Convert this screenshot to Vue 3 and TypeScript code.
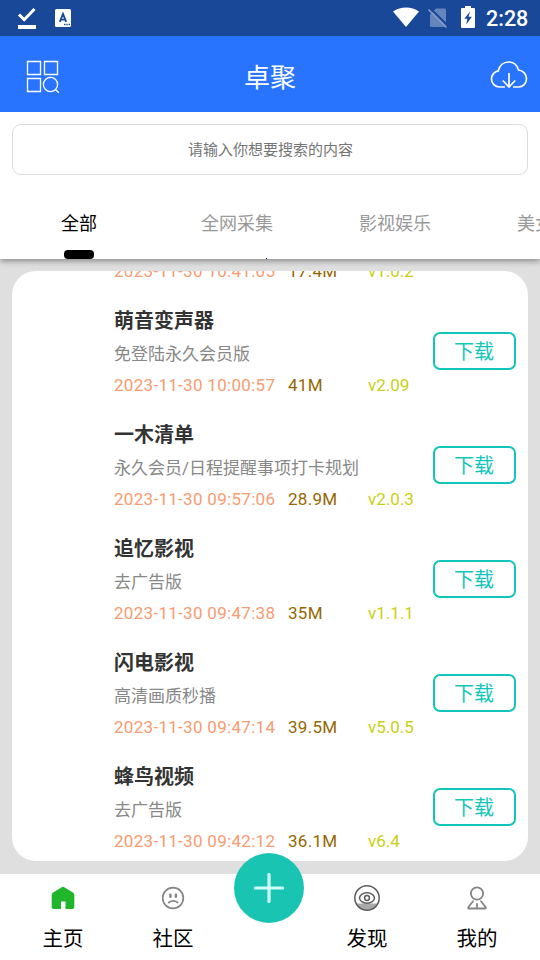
<script setup lang="ts">
interface AppItem {
  title: string
  desc: string
  date: string
  size: string
  version: string
}

const tabs: string[] = ['全部', '全网采集', '影视娱乐', '美女直播']

const apps: AppItem[] = [
  { title: '', desc: '', date: '2023-11-30 10:41:05', size: '17.4M', version: 'v1.0.2' },
  { title: '萌音变声器', desc: '免登陆永久会员版', date: '2023-11-30 10:00:57', size: '41M', version: 'v2.09' },
  { title: '一木清单', desc: '永久会员/日程提醒事项打卡规划', date: '2023-11-30 09:57:06', size: '28.9M', version: 'v2.0.3' },
  { title: '追忆影视', desc: '去广告版', date: '2023-11-30 09:47:38', size: '35M', version: 'v1.1.1' },
  { title: '闪电影视', desc: '高清画质秒播', date: '2023-11-30 09:47:14', size: '39.5M', version: 'v5.0.5' },
  { title: '蜂鸟视频', desc: '去广告版', date: '2023-11-30 09:42:12', size: '36.1M', version: 'v6.4' },
]
</script>

<template>
  <div class="screen">
    <div class="status">
      <svg class="s-check" width="20" height="24" viewBox="0 0 20 24">
        <path d="M2 8.500l5.200 5.200L17.500 3" fill="none" stroke="#fff" stroke-width="3" />
        <path d="M1 19h18v4H1z" fill="#fff" />
      </svg>
      <svg class="s-app" width="16" height="18" viewBox="0 0 16 18">
        <rect width="16" height="18" rx="1.500" fill="#fff" />
        <path d="M4.800 12.800L8 5l3.200 7.800M5.800 10.600h4.400" fill="none" stroke="#194899" stroke-width="1.900" />
        <path d="M9 15.500h1.400M11.300 15.500h1.400M13.600 15.500h1.400" stroke="#194899" stroke-width="1.400" />
      </svg>
      <svg class="s-wifi" width="26" height="20" viewBox="0 0 26 20">
        <path d="M0 4.500C7.500-1 18.500-1 26 4.500L13 20z" fill="#fff" />
      </svg>
      <svg class="s-sim" width="20" height="20" viewBox="0 0 20 20">
        <path d="M2 6.500L8 .5h8.500q1.500 0 1.500 1.500v17H3.500Q2 19 2 17.500z" fill="#6585bd" />
        <path d="M1.500 -.5L20.500 18.500" stroke="#194899" stroke-width="2" />
        <path d="M.5 1.500L18.500 19.500" stroke="#8199c7" stroke-width="1.600" />
      </svg>
      <svg class="s-battery" width="14" height="22" viewBox="0 0 14 22">
        <path d="M4 0h6v2h3q1 0 1 1v18q0 1-1 1H1q-1 0-1-1V3q0-1 1-1h3z" fill="#fff" />
        <path d="M9 5.500L3.300 12.800h3L5.300 18.500l5.500-7.800H7.500z" fill="#194899" />
      </svg>
      <span class="time">2:28</span>
    </div>

    <header class="bar">
      <svg width="34" height="34" viewBox="0 0 34 34" fill="none" stroke="#fff" stroke-width="1.300">
        <path d="M1.500 1.500h13v13h-13zM18.500 1.500h13v13h-13zM1.500 18.500h13v13h-13z" />
        <circle cx="24.500" cy="24.500" r="7.100" />
        <path d="M29.500 29.500l3.300 3.300" />
      </svg>
      <h1>卓聚</h1>
      <svg class="cloud" width="38" height="30" viewBox="0 0 38 30" fill="none" stroke="#fff" stroke-width="1.700">
        <path d="M15 27H9.500C5 27 1.500 23.500 1.500 19c0-4.200 3-7.500 6.800-8.200C9.500 5.500 13.500 2 18.700 2c5 0 8.500 3.300 9.800 8 4.600.5 8 4.200 8 8.700 0 4.700-3.500 8.300-8 8.300H23" />
        <path d="M19 13v14M12.800 20.500l6.200 6.500 6.200-6.500" />
      </svg>
    </header>

    <section class="search-area">
      <div class="search">请输入你想要搜索的内容</div>
    </section>

    <nav class="tabs">
      <div v-for="(tab, i) in tabs" :key="tab" class="tab" :class="{ active: i === 0, marked: i === 1 }">
        <span>{{ tab }}</span>
      </div>
    </nav>

    <main class="body">
      <div class="card">
        <div class="list">
          <article v-for="app in apps" :key="app.date" class="row">
            <div class="info">
              <h2>{{ app.title }}</h2>
              <p class="desc">{{ app.desc }}</p>
              <div class="meta">
                <span class="date">{{ app.date }}</span>
                <span class="size">{{ app.size }}</span>
                <span class="version">{{ app.version }}</span>
              </div>
            </div>
            <button v-if="app.title" class="download">下载</button>
          </article>
        </div>
      </div>
    </main>

    <footer class="nav">
      <div class="item">
        <svg width="28" height="28" viewBox="0 0 28 28">
          <path d="M12.700 3.200q1.300-.8 2.600 0l8.600 5.300q1.400.9 1.400 2.500v12.200q0 1.800-1.800 1.800h-7v-7.500h-4.500V25H4.500q-1.800 0-1.800-1.800V11q0-1.600 1.400-2.500z" fill="#20b52b" />
        </svg>
        <span>主页</span>
      </div>
      <div class="item">
        <svg width="28" height="28" viewBox="0 0 28 28" fill="none" stroke="#858585" stroke-width="1.700" stroke-linecap="round">
          <circle cx="14" cy="14" r="10.300" />
          <path d="M11.400 10.800v2M16.900 10.800v2" stroke-width="2.500" />
          <path d="M9.700 18.500q4.500-3.200 9 0" />
        </svg>
        <span>社区</span>
      </div>
      <div class="center">
        <button class="plus">
          <svg width="30" height="30" viewBox="0 0 30 30">
            <path d="M15 1.500v27M1.500 15h27" stroke="#d0fff8" stroke-width="3.200" stroke-linecap="round" />
          </svg>
        </button>
      </div>
      <div class="item">
        <svg width="28" height="28" viewBox="0 0 28 28" fill="none" stroke="#5d5d5d" stroke-width="1.500">
          <path d="M3.500 19.500h21q-3.500 6.700-10.500 6.700T3.500 19.500z" fill="#aaa" stroke="none" />
          <circle cx="14" cy="14" r="12.200" />
          <ellipse cx="14" cy="14" rx="7.500" ry="5.200" />
          <circle cx="14" cy="14" r="2.400" />
        </svg>
        <span>发现</span>
      </div>
      <div class="item">
        <svg width="28" height="28" viewBox="0 0 28 28" fill="none" stroke="#858585" stroke-width="1.800" stroke-linecap="round" stroke-linejoin="round">
          <circle cx="14" cy="9.500" r="6.100" />
          <path d="M10 17.300L5.300 23.300Q4.800 24.500 6 24.500h16q1.200 0 .7-1.200L18 17.300M14 20v4" />
        </svg>
        <span>我的</span>
      </div>
    </footer>
  </div>
</template>

<style>
body {
  margin: 0;
}
</style>

<style scoped>
* {
  box-sizing: border-box;
}
.screen {
  width: 540px;
  height: 960px;
  overflow: hidden;
  display: flex;
  flex-direction: column;
  background: #fff;
  font-family: Roboto, 'Noto Sans CJK SC', sans-serif;
}
.status {
  height: 36px;
  flex: none;
  display: flex;
  align-items: flex-start;
  padding: 6px 12px 0 17px;
  background: #194899;
  color: #fff;
}
.s-check {
  margin-right: 18px;
}
.s-app {
  margin-top: 3px;
}
.s-wifi {
  margin: 1px 9px 0 auto;
}
.s-sim {
  margin: 2px 13px 0 0;
}
.s-battery {
  margin-right: 11px;
}
.time {
  width: 42px;
  font-size: 21.500px;
  font-weight: 500;
  line-height: 25px;
  white-space: nowrap;
}
.bar {
  height: 76px;
  flex: none;
  display: flex;
  align-items: center;
  justify-content: space-between;
  padding: 5px 12px 0 26px;
  background: #2874ff;
  color: #fff;
}
.bar h1 {
  margin: 2px 0 0 -10px;
  font-size: 26px;
  font-weight: 400;
  line-height: 38px;
}
.cloud {
  margin-bottom: 4px;
}
.search-area {
  flex: none;
  padding: 12px 12px 0;
  position: relative;
  z-index: 2;
  background: #fff;
}
.search {
  height: 51px;
  border: 1px solid #dcdcdc;
  border-radius: 9px;
  font-size: 15px;
  line-height: 51px;
  text-align: center;
  text-indent: 1px;
  color: #757575;
}
.tabs {
  flex: none;
  height: 84px;
  display: flex;
  position: relative;
  z-index: 1;
  background: #fff;
  box-shadow: 0 2px 6px rgba(0, 0, 0, 0.4);
  clip-path: inset(0 0 -12px 0);
}
.tab {
  flex: 0 0 158px;
  height: 84px;
  position: relative;
  text-align: center;
  font-size: 18px;
  line-height: 26px;
  padding-top: 36px;
  color: #999;
}
.tab.active {
  color: #000;
}
.tab.active::after {
  content: '';
  position: absolute;
  left: 64px;
  bottom: 0;
  width: 30px;
  height: 9px;
  border-radius: 4px;
  background: #000;
}
.tab.marked::after {
  content: '';
  position: absolute;
  left: 108px;
  bottom: 0;
  width: 1px;
  height: 1px;
  background: #1200b0;
}
.body {
  flex: 1;
  min-height: 0;
  padding: 12px;
  background: #dfdfdf;
}
.card {
  height: 590px;
  border-radius: 24px;
  background: #fff;
  overflow: hidden;
}
.list {
  margin-top: -91px;
}
.row {
  height: 114px;
  display: flex;
  align-items: center;
  justify-content: space-between;
  padding: 0 12px 0 102px;
}
.info {
  height: 114px;
  padding-top: 13px;
}
.row h2 {
  margin: 0;
  height: 30px;
  font-size: 20px;
  font-weight: 700;
  line-height: 29px;
  color: #333;
}
.desc {
  margin: 3px 0 0;
  height: 30px;
  font-size: 17px;
  line-height: 29px;
  color: #888;
}
.meta {
  display: flex;
  margin-top: 3px;
  font-size: 17px;
  line-height: 24px;
  letter-spacing: 0.300px;
  white-space: nowrap;
}
.date {
  width: 174px;
  color: #f89b70;
}
.size {
  width: 80px;
  color: #966700;
}
.version {
  letter-spacing: 0;
  color: #c8d013;
}
.download {
  width: 83px;
  height: 38px;
  padding: 3px 1px 0 0;
  border: 2px solid #12c5ba;
  border-radius: 7px;
  background: #fff;
  color: #12c5ba;
  font: inherit;
  font-size: 20px;
  line-height: 31px;
}
.nav {
  flex: none;
  height: 86px;
  display: flex;
  padding: 0 8px;
  position: relative;
  background: #fff;
}
.item {
  width: 110px;
  display: flex;
  flex-direction: column;
  align-items: center;
  padding-top: 10px;
  font-size: 20.500px;
  line-height: 30px;
  color: #000;
}
.item span {
  margin-top: 12px;
}
.center {
  width: 84px;
  display: flex;
  justify-content: center;
}
.plus {
  flex: none;
  width: 70px;
  height: 70px;
  margin: -21px 0 0 -2px;
  padding: 0;
  display: flex;
  align-items: center;
  justify-content: center;
  border: none;
  border-radius: 50%;
  background: #19c5b2;
}
</style>
